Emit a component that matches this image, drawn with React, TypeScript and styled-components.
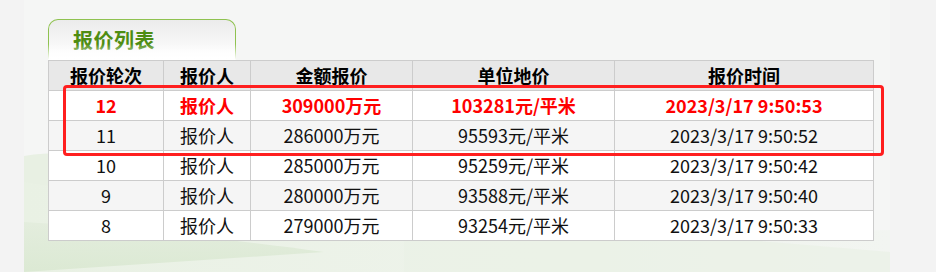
import styled, { createGlobalStyle } from 'styled-components';

const GlobalStyle = createGlobalStyle`
  html, body {
    margin: 0;
    padding: 0;
    background: #f3f3f3;
    font-family: "Noto Sans CJK SC", "Noto Sans", sans-serif;
  }
`;

interface Bid {
  round: number;
  bidder: string;
  amount: string;
  unit: string;
  time: string;
}

const COLUMNS = [
  { title: '报价轮次', width: 115 },
  { title: '报价人', width: 87 },
  { title: '金额报价', width: 162 },
  { title: '单位地价', width: 202 },
  { title: '报价时间', width: 259 },
];

const BIDS: Bid[] = [
  { round: 12, bidder: '报价人', amount: '309000万元', unit: '103281元/平米', time: '2023/3/17 9:50:53' },
  { round: 11, bidder: '报价人', amount: '286000万元', unit: '95593元/平米', time: '2023/3/17 9:50:52' },
  { round: 10, bidder: '报价人', amount: '285000万元', unit: '95259元/平米', time: '2023/3/17 9:50:42' },
  { round: 9, bidder: '报价人', amount: '280000万元', unit: '93588元/平米', time: '2023/3/17 9:50:40' },
  { round: 8, bidder: '报价人', amount: '279000万元', unit: '93254元/平米', time: '2023/3/17 9:50:33' },
];

// 背景的淡绿色山形
function Hills() {
  return (
    <HillsSvg viewBox="0 0 866 130" preserveAspectRatio="none">
      <defs>
        <linearGradient id="hillA" x1="0" y1="0" x2="0" y2="1">
          <stop offset="0" stopColor="#e2ecdc" />
          <stop offset="1" stopColor="#d8e7cf" />
        </linearGradient>
        <linearGradient id="hillB" x1="0" y1="0" x2="1" y2="0">
          <stop offset="0" stopColor="#e9f1e4" />
          <stop offset="0.6" stopColor="#eef3eb" />
          <stop offset="1" stopColor="#f2f5f1" />
        </linearGradient>
      </defs>
      <path d="M0 14 C40 8 70 12 110 20 L180 40 L0 50 Z" fill="#e8f0e3" />
      <path d="M0 40 C120 60 250 70 380 86 C520 92 700 92 866 88 L866 130 L0 130 Z" fill="url(#hillB)" />
      <path d="M0 80 C90 86 200 96 300 110 L0 130 Z" fill="url(#hillA)" opacity="0.8" />
      <path d="M380 96 C460 84 560 80 700 96 L866 110 L866 130 L380 130 Z" fill="#eaf1e6" opacity="0.7" />
    </HillsSvg>
  );
}

export default function App() {
  return (
    <>
      <GlobalStyle />
      <Page>
        <Panel>
          <Hills />
          <Tab>报价列表</Tab>
          <Table>
            <colgroup>
              {COLUMNS.map((c) => (
                <col key={c.title} style={{ width: c.width }} />
              ))}
            </colgroup>
            <thead>
              <tr>
                {COLUMNS.map((c) => (
                  <HeadCell key={c.title}>{c.title}</HeadCell>
                ))}
              </tr>
            </thead>
            <tbody>
              {BIDS.map((bid, i) => (
                <Row key={bid.round} $striped={i % 2 === 1}>
                  <Cell $latest={i === 0}>{bid.round}</Cell>
                  <Cell $latest={i === 0}>{bid.bidder}</Cell>
                  <Cell $latest={i === 0}>{bid.amount}</Cell>
                  <Cell $latest={i === 0}>{bid.unit}</Cell>
                  <Cell $latest={i === 0}>{bid.time}</Cell>
                </Row>
              ))}
            </tbody>
          </Table>
          <Highlight />
        </Panel>
      </Page>
    </>
  );
}

const Page = styled.div`
  padding-left: 24px;
  height: 272px;
  overflow: hidden;
`;

const Panel = styled.div`
  position: relative;
  width: 842px;
  height: 272px;
  padding: 19px 0 0 24px;
  background: #f5f6f5;
`;

const HillsSvg = styled.svg`
  position: absolute;
  left: 0;
  top: 142px;
  width: 866px;
  height: 130px;
  z-index: 0;
`;

const Tab = styled.div`
  position: relative;
  box-sizing: border-box;
  width: 188px;
  height: 41px;
  padding: 6px 0 0 24px;
  border: 1px solid #8fc250;
  border-bottom: none;
  border-radius: 10px 10px 0 0;
  background: linear-gradient(#ebebeb, #ffffff);
  color: #4e8d12;
  font-size: 20px;
  font-weight: 700;
  line-height: 28px;
  letter-spacing: 0.5px;

  &::after {
    content: '';
    position: absolute;
    left: -1px;
    right: -1px;
    bottom: 0;
    height: 16px;
    background: linear-gradient(rgba(255, 255, 255, 0), #ffffff);
  }
`;

const Table = styled.table`
  position: relative;
  z-index: 1;
  width: 826px;
  border-collapse: collapse;
  table-layout: fixed;
  background: #ffffff;
  font-size: 18px;
`;

const HeadCell = styled.th`
  height: 29px;
  padding: 0;
  border: 1px solid #cccccc;
  background: #e8e8e8;
  color: #000000;
  font-weight: 700;
  text-align: center;
  line-height: 29px;
`;

const Row = styled.tr<{ $striped: boolean }>`
  background: ${(p) => (p.$striped ? '#f5f5f5' : '#ffffff')};
`;

const Cell = styled.td<{ $latest: boolean }>`
  height: 29px;
  padding: 0;
  border: 1px solid #cccccc;
  text-align: center;
  line-height: 29px;
  color: ${(p) => (p.$latest ? '#ff0000' : '#111111')};
  font-weight: ${(p) => (p.$latest ? 700 : 400)};
`;

const Highlight = styled.div`
  position: absolute;
  left: 39px;
  top: 85px;
  width: 815px;
  height: 65px;
  border: 3px solid #ff1f1f;
  border-radius: 4px;
  z-index: 2;
  pointer-events: none;
`;
